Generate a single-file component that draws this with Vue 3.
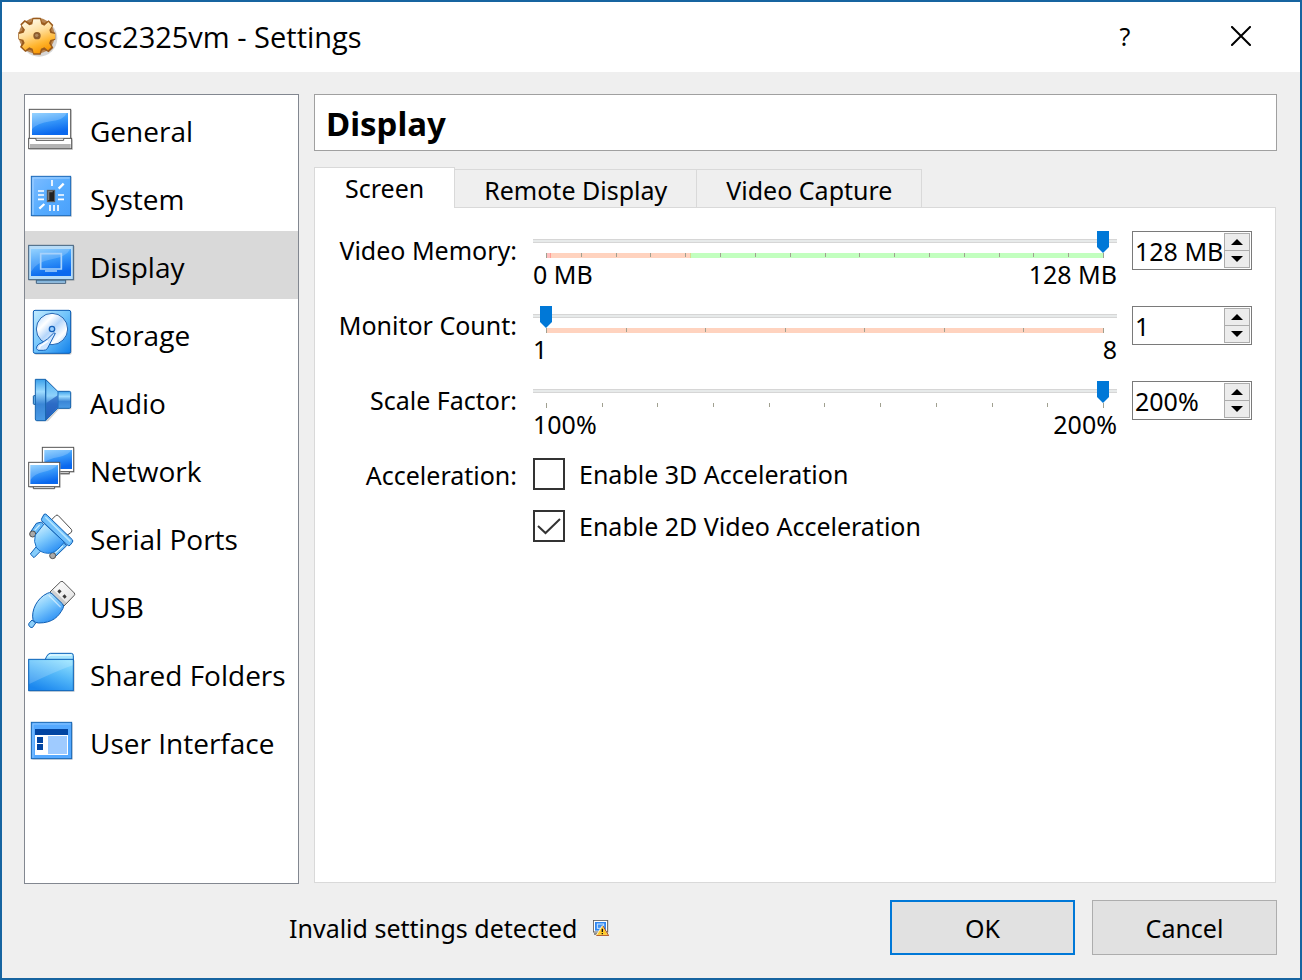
<script setup>
import { ref, reactive } from 'vue'

const categories = [
  { id: 'general', name: 'General' },
  { id: 'system', name: 'System' },
  { id: 'display', name: 'Display' },
  { id: 'storage', name: 'Storage' },
  { id: 'audio', name: 'Audio' },
  { id: 'network', name: 'Network' },
  { id: 'serial', name: 'Serial Ports' },
  { id: 'usb', name: 'USB' },
  { id: 'folders', name: 'Shared Folders' },
  { id: 'interface', name: 'User Interface' },
]
const current = ref('display')

const tabs = ['Screen', 'Remote Display', 'Video Capture']
const activeTab = ref('Screen')

const sliders = reactive([
  {
    id: 'memory', label: 'Video Memory:', min: 0, max: 128, value: 128, unit: ' MB', ticks: 16,
    zones: [
      { kind: 'bad', size: 1 },
      { kind: 'warn', size: 32 },
      { kind: 'good', size: 95 },
    ],
  },
  {
    id: 'monitors', label: 'Monitor Count:', min: 1, max: 8, value: 1, unit: '', ticks: 7,
    zones: [{ kind: 'warn', size: 7 }],
  },
  { id: 'scale', label: 'Scale Factor:', min: 100, max: 200, value: 200, unit: '%', ticks: 10, zones: [] },
])

const accel3d = ref(false)
const accel2d = ref(true)

function setValue(s, v) {
  if (!Number.isNaN(v)) s.value = Math.min(s.max, Math.max(s.min, v))
}
</script>

<template>
  <svg class="defs" aria-hidden="true">
    <defs>
      <linearGradient id="gScreen" x1="0" y1="0" x2="0.3" y2="1">
        <stop offset="0" stop-color="#7cc8ff" /><stop offset="0.45" stop-color="#3a9bfa" /><stop offset="1" stop-color="#0a68ee" />
      </linearGradient>
      <linearGradient id="gTile" x1="0" y1="0" x2="1" y2="1">
        <stop offset="0" stop-color="#7ebcff" /><stop offset="0.5" stop-color="#58adff" /><stop offset="1" stop-color="#4aa0fb" />
      </linearGradient>
      <linearGradient id="gDrive" x1="0" y1="0" x2="1" y2="1">
        <stop offset="0" stop-color="#c4ecff" /><stop offset="0.5" stop-color="#6fc3fb" /><stop offset="1" stop-color="#0f7fea" />
      </linearGradient>
      <linearGradient id="gDisc" x1="0" y1="0" x2="1" y2="1">
        <stop offset="0" stop-color="#a9d3ff" /><stop offset="0.3" stop-color="#ffffff" /><stop offset="0.5" stop-color="#b5d6fb" />
        <stop offset="0.75" stop-color="#ffffff" /><stop offset="1" stop-color="#8fc3fa" />
      </linearGradient>
      <linearGradient id="gHorn" x1="0" y1="0" x2="0" y2="1">
        <stop offset="0" stop-color="#3aa0ea" /><stop offset="0.3" stop-color="#9edcff" /><stop offset="0.6" stop-color="#3a86d6" /><stop offset="1" stop-color="#4a9be6" />
      </linearGradient>
      <linearGradient id="gCone" x1="0" y1="0" x2="0" y2="1">
        <stop offset="0" stop-color="#4fb0f0" /><stop offset="0.4" stop-color="#8fd2fb" /><stop offset="0.6" stop-color="#3f86d8" /><stop offset="1" stop-color="#2a5fb8" />
      </linearGradient>
      <linearGradient id="gPlug" x1="0" y1="0" x2="0.6" y2="1">
        <stop offset="0" stop-color="#e2f8ff" /><stop offset="0.5" stop-color="#82ccfd" /><stop offset="1" stop-color="#2b8ff4" />
      </linearGradient>
      <linearGradient id="gMetal" x1="0" y1="0" x2="1" y2="1">
        <stop offset="0" stop-color="#ffffff" /><stop offset="0.5" stop-color="#f2f2f2" /><stop offset="1" stop-color="#dcdcdc" />
      </linearGradient>
      <linearGradient id="gFolder" x1="0.8" y1="0" x2="0.3" y2="1">
        <stop offset="0" stop-color="#8fe0ff" /><stop offset="0.5" stop-color="#4fb4f8" /><stop offset="1" stop-color="#1a86ee" />
      </linearGradient>
      <linearGradient id="gGear" x1="0.2" y1="0" x2="0.6" y2="1">
        <stop offset="0" stop-color="#fffdf0" /><stop offset="0.4" stop-color="#ffe0a0" /><stop offset="0.75" stop-color="#ffb52e" /><stop offset="1" stop-color="#f79400" />
      </linearGradient>
      <linearGradient id="gStand" x1="0" y1="0" x2="0" y2="1">
        <stop offset="0" stop-color="#5d96c6" /><stop offset="1" stop-color="#b4dcf8" />
      </linearGradient>
    </defs>
  </svg>

  <div class="window">
    <header class="titlebar">
      <svg class="gear" viewBox="48 42 132 132" aria-hidden="true">
        <circle cx="117" cy="112" r="55" fill="#8a8a8a" opacity="0.35" />
        <circle cx="110" cy="104" r="54" fill="#b98550" />
        <path d="M98 50 H122 L126 64 L134 66 L146 58 L160 72 L153 87 L156 92 L166 95 V116 L156 120 L153 127 L160 140 L146 154 L132 146 L126 149 L122 161 H100 L96 149 L88 146 L76 153 L60 138 L67 125 L65 119 L55 115 V94 L66 90 L68 84 L61 70 L74 57 L88 65 L95 62 Z" fill="#9a5b1d" />
        <path d="M100 55 L120 55 L124 70 L133 74 L145 63 L156 75 L148 87 L151 96 L165 99 L165 113 L151 117 L147 127 L154 138 L144 148 L133 139 L123 143 L119 157 L101 157 L98 143 L88 139 L76 148 L66 137 L74 126 L70 116 L57 113 L57 99 L71 95 L75 86 L65 73 L75 63 L88 73 L97 70 Z" fill="url(#gGear)" />
        <circle cx="111" cy="104" r="11" fill="#8c5c2c" />
        <circle cx="110" cy="103" r="5" fill="#b08a5e" />
      </svg>
      <h1 class="title">cosc2325vm - Settings</h1>
      <button class="win-btn" type="button" aria-label="Help">?</button>
      <button class="win-btn" type="button" aria-label="Close">
        <svg viewBox="0 0 20 20" width="20" height="20"><path d="M1 1 L19 19 M19 1 L1 19" stroke="#000" stroke-width="2" stroke-linecap="square" fill="none" /></svg>
      </button>
    </header>

    <main class="body">
      <nav class="sidebar">
        <button
          v-for="c in categories" :key="c.id" type="button" class="category"
          :class="{ selected: c.id === current }" @click="current = c.id"
        >
          <svg v-if="c.id === 'general'" class="icon" viewBox="24 45 144 144">
            <rect x="30" y="60" width="126" height="88" fill="#bbb" opacity=".6" /><rect x="28" y="148" width="131" height="32" fill="#bbb" opacity=".6" />
            <rect x="28" y="58" width="124" height="88" fill="#fff" stroke="#555" stroke-width="3" />
            <rect x="36" y="69" width="108" height="66" fill="url(#gScreen)" />
            <path d="M36 69 H140 Q132 90 92 94 Q50 100 36 118 Z" fill="#fff" opacity=".2" />
            <rect x="26" y="145" width="129" height="31" fill="#fff" stroke="#555" stroke-width="3" />
            <rect x="30" y="162" width="122" height="12" fill="#b4b4b4" />
            <path d="M48 146 V151 H131 V146" fill="#fff" stroke="#555" stroke-width="3" />
          </svg>
          <svg v-else-if="c.id === 'system'" class="icon" viewBox="24 249 144 144">
            <rect x="37" y="261" width="119" height="120" fill="#bbb" opacity=".5" />
            <rect x="34" y="259" width="118" height="118" fill="url(#gTile)" stroke="#1a68b8" stroke-width="3" />
            <path d="M39 374 V264 H149" fill="none" stroke="#a6d3ff" stroke-width="3" />
            <path d="M96 270 V288 M90 345 V363 M102 345 V363 M114 345 V363 M54 303 H72 M54 315 H72 M54 328 H72 M114 315 H132 M114 328 H132" stroke="#fff" stroke-width="5" />
            <path d="M116 296 L131 281 M58 356 L73 342" stroke="#fff" stroke-width="7" />
            <rect x="82" y="301" width="22" height="34" fill="#222" stroke="#5d5d5d" stroke-width="3" />
            <path d="M86 331 V305 H98" fill="none" stroke="#777" stroke-width="4" />
          </svg>
          <svg v-else-if="c.id === 'display'" class="icon" viewBox="24 453 144 144">
            <rect x="28" y="468" width="136" height="104" fill="#999" opacity=".5" />
            <path d="M49 570 H137 V580 H49 Z" fill="url(#gStand)" stroke="#41607c" stroke-width="3" />
            <rect x="26" y="466" width="134" height="103" fill="#b7dcf8" stroke="#41607c" stroke-width="3" />
            <rect x="33" y="477" width="120" height="81" fill="url(#gScreen)" />
            <path d="M33 477 H150 Q140 500 94 508 Q50 516 33 545 Z" fill="#fff" opacity=".18" />
            <path d="M62 491 H124 V537 H62 Z M75 543 H111" fill="none" stroke="#a8d2fb" stroke-width="5" />
          </svg>
          <svg v-else-if="c.id === 'storage'" class="icon" viewBox="24 27 144 144">
            <rect x="43" y="33" width="112" height="131" rx="6" fill="#999" opacity=".5" />
            <rect x="40" y="31" width="112" height="129" rx="5" fill="url(#gDrive)" stroke="#0a5cb4" stroke-width="3" />
            <circle cx="96" cy="87" r="47" fill="url(#gDisc)" stroke="#2467b5" stroke-width="3" />
            <circle cx="96" cy="87" r="8" fill="#9ccfff" stroke="#1460b8" stroke-width="4" />
            <path d="M106 100 L82 146 Q78 151 70 151 H54 Q46 147 51 138 Q54 132 66 128 Q82 120 101 99 Z" fill="#cfe6ff" stroke="#1460b8" stroke-width="3" />
            <path d="M60 146 Q56 139 68 134 L84 123" fill="none" stroke="#fff" stroke-width="4" />
          </svg>
          <svg v-else-if="c.id === 'audio'" class="icon" viewBox="24 231 144 144">
            <path d="M50 240 H82 L117 277 H154 V328 H117 L84 364 H50 Z" fill="#999" opacity=".45" />
            <rect x="40" y="287" width="9" height="26" rx="2" fill="#6cb8f0" stroke="#15599e" stroke-width="3" />
            <rect x="111" y="274" width="41" height="51" rx="4" fill="url(#gHorn)" stroke="#1663ad" stroke-width="3" />
            <path d="M77 239 L114 275 V324 L77 361 Z" fill="url(#gCone)" stroke="#1b6abc" stroke-width="3" />
            <path d="M46 238 H77 V362 H50 Q46 362 46 357 Z" fill="url(#gHorn)" stroke="#1663ad" stroke-width="3" />
            <path d="M79 309 L113 286 V322 L79 355 Z" fill="#2460bd" opacity=".7" />
          </svg>
          <svg v-else-if="c.id === 'network'" class="icon" viewBox="24 435 144 144">
            <path d="M70 445 H164 V518 H150 V525 H70 Z" fill="#aaa" opacity=".5" />
            <path d="M118 515 H148 V521 H118 Z" fill="#fff" stroke="#555" stroke-width="3" />
            <rect x="67" y="442" width="94" height="73" fill="#fff" stroke="#555" stroke-width="3" />
            <rect x="73" y="450" width="83" height="57" fill="url(#gScreen)" />
            <path d="M73 450 H154 Q146 466 114 472 Q88 476 73 487 Z" fill="#fff" opacity=".2" />
            <rect x="29" y="490" width="93" height="74" fill="#aaa" opacity=".6" />
            <path d="M40 560 H104 V566 H40 Z" fill="#fff" stroke="#555" stroke-width="3" />
            <rect x="26" y="487" width="93" height="73" fill="#fff" stroke="#555" stroke-width="3" />
            <rect x="31" y="495" width="83" height="57" fill="url(#gScreen)" />
            <path d="M31 495 H112 Q100 510 70 516 Q42 522 31 540 Z" fill="#fff" opacity=".2" />
          </svg>
          <svg v-else-if="c.id === 'serial'" class="icon" viewBox="24 39 144 144">
            <path d="M92 62 L107 47 Q111 43 115 47 L154 88 Q157 92 154 97 L141 106 Z" fill="#fff" stroke="#4b4b4b" stroke-width="3" />
            <path d="M49 70 L65 66 L74 78 L43 108 L33 94 Z M112 138 L128 126 L140 137 L106 170 L93 158 Z" fill="#6cbcf8" stroke="#0e5db2" stroke-width="3" />
            <path d="M44 91 L59 75 M105 160 L129 137" stroke="#c8edff" stroke-width="4" />
            <circle cx="38" cy="102" r="9" fill="#aaa" stroke="#505050" stroke-width="3" />
            <circle cx="98" cy="167" r="9" fill="#aaa" stroke="#505050" stroke-width="3" />
            <path d="M48 141 L61 154 L42 173 L31 162 Z" fill="#86cdfb" stroke="#0e5db2" stroke-width="3" />
            <path d="M73 71 L133 126 L122 139 Q103 161 83 160 Q60 158 49 142 Q40 125 46 105 Z" fill="url(#gPlug)" stroke="#1a70c6" stroke-width="3" />
            <path d="M72 43 Q77 40 82 46 L157 119 Q160 123 157 127 L150 136 Q146 139 141 134 L65 62 Q63 58 66 54 Z" fill="#6fbffb" stroke="#0e5db2" stroke-width="3" />
            <path d="M76 51 L151 124" stroke="#b5e6ff" stroke-width="5" />
          </svg>
          <svg v-else-if="c.id === 'usb'" class="icon" viewBox="24 243 144 144">
            <path d="M90 276 L122 245 Q126 242 130 246 L163 279 Q166 283 162 287 L132 318 Z" fill="url(#gMetal)" stroke="#555" stroke-width="3" />
            <path d="M92 276 L100 269 L140 309 L132 317 Z" fill="#999" opacity=".4" />
            <path d="M112 274 L118 268 L125 274 L118 281 Z M127 289 L134 283 L140 290 L134 296 Z" fill="#3b3b3b" />
            <path d="M36 360 L47 369 L38 382 Q33 384 29 380 Q24 375 27 370 Z" fill="#8dd0fb" stroke="#0e5db2" stroke-width="3" />
            <path d="M82 280 Q89 275 96 281 L128 312 Q133 318 129 325 C116 350 98 369 56 369 Q45 370 39 359 C33 332 51 294 82 280 Z" fill="url(#gPlug)" stroke="#0e5db2" stroke-width="3" />
            <path d="M86 286 L122 322" stroke="#fff" opacity=".55" stroke-width="4" />
          </svg>
          <svg v-else-if="c.id === 'folders'" class="icon" viewBox="24 447 144 144">
            <rect x="28" y="481" width="136" height="94" fill="#999" opacity=".5" />
            <path d="M75 480 L80 469 Q85 460 91 460 H154 Q160 460 160 467 V482 H75 Z" fill="#a9e6ff" stroke="#0a61b8" stroke-width="3" />
            <path d="M86 469 Q89 465 94 465 H155" stroke="#e4faff" stroke-width="4" fill="none" />
            <rect x="26" y="478" width="134" height="94" fill="url(#gFolder)" stroke="#0a61b8" stroke-width="3" />
            <path d="M28 481 H158 V496 Q105 515 28 552 Z" fill="#fff" opacity=".18" />
          </svg>
          <svg v-else class="icon" viewBox="24 651 144 144">
            <rect x="37" y="670" width="121" height="109" fill="#999" opacity=".5" />
            <rect x="34" y="667" width="121" height="109" fill="#55a9ff" stroke="#1565b4" stroke-width="3" />
            <path d="M39 773 V672 H152" stroke="#8bc5ff" stroke-width="3" fill="none" />
            <rect x="45" y="687" width="99" height="18" fill="#0245a2" /><rect x="45" y="705" width="99" height="60" fill="#fff" />
            <rect x="51" y="711" width="18" height="18" fill="#0245a2" /><rect x="51" y="732" width="18" height="18" fill="#0245a2" />
            <rect x="84" y="708" width="57" height="54" fill="#9fcbff" />
          </svg>
          <span>{{ c.name }}</span>
        </button>
      </nav>

      <section class="content">
        <h2 class="page-title">Display</h2>

        <div class="tabs" role="tablist">
          <button
            v-for="t in tabs" :key="t" type="button" role="tab" class="tab"
            :class="{ active: t === activeTab }" :aria-selected="t === activeTab" @click="activeTab = t"
          >{{ t }}</button>
        </div>

        <div class="pane">
          <div v-for="s in sliders" :key="s.id" class="setting">
            <label class="setting-label" :for="s.id">{{ s.label }}</label>
            <div class="slider">
              <div class="groove">
                <input :id="s.id" v-model.number="s.value" type="range" :min="s.min" :max="s.max">
              </div>
              <div class="scale">
                <div class="zones">
                  <i v-for="z in s.zones" :key="z.kind" :class="z.kind" :style="{ flexGrow: z.size }"></i>
                </div>
                <div class="ticks"><i v-for="n in s.ticks + 1" :key="n"></i></div>
              </div>
              <div class="limits"><span>{{ s.min }}{{ s.unit }}</span><span>{{ s.max }}{{ s.unit }}</span></div>
            </div>
            <div class="spin">
              <input
                type="text" :aria-label="s.label" :value="s.value + s.unit"
                @change="setValue(s, parseInt($event.target.value))"
              >
              <div class="steps">
                <button type="button" aria-label="Increase" @click="setValue(s, s.value + 1)">
                  <svg viewBox="0 0 12 6" width="12" height="6"><path d="M0 6 L6 0 L12 6 Z" /></svg>
                </button>
                <button type="button" aria-label="Decrease" @click="setValue(s, s.value - 1)">
                  <svg viewBox="0 0 12 6" width="12" height="6"><path d="M0 0 L6 6 L12 0 Z" /></svg>
                </button>
              </div>
            </div>
          </div>

          <div class="setting" role="group" aria-labelledby="accel">
            <span id="accel" class="setting-label">Acceleration:</span>
            <div class="checks">
              <label class="check"><input v-model="accel3d" type="checkbox"><span>Enable 3D Acceleration</span></label>
              <label class="check"><input v-model="accel2d" type="checkbox"><span>Enable 2D Video Acceleration</span></label>
            </div>
          </div>
        </div>
      </section>
    </main>

    <footer class="footer">
      <div class="status">
        <span>Invalid settings detected</span>
        <svg viewBox="0 0 48 48" width="16" height="16" aria-hidden="true">
          <rect x="1" y="1" width="43" height="35" fill="#fff" stroke="#5a5a5a" stroke-width="3" />
          <rect x="6" y="6" width="33" height="26" fill="#2f86f0" />
          <rect x="13" y="12" width="19" height="13" fill="#3f93f4" stroke="#cfe6ff" stroke-width="3" />
          <path d="M3 42 H20" stroke="#5a5a5a" stroke-width="4" />
          <path d="M28 17 L46 46 H10 Z" fill="#ffc928" stroke="#fff2c8" stroke-width="3" />
          <path d="M30 18 L47 47 H10" fill="none" stroke="#a8481a" stroke-width="3" />
          <path d="M28 26 V36 M28 39 V43" stroke="#111" stroke-width="4" />
        </svg>
      </div>
      <button type="button" class="action primary">OK</button>
      <button type="button" class="action">Cancel</button>
    </footer>
  </div>
</template>

<style>
body { background: #efefef; }
</style>

<style scoped>
.defs { position: absolute; width: 0; height: 0; }
.window {
  box-sizing: border-box;
  min-height: 100vh;
  display: flex;
  flex-direction: column;
  border: 2px solid #1664a0;
  background: #efefef;
  color: #000;
  font-family: "Noto Sans", "Open Sans", sans-serif;
  font-size: 25px;
  line-height: 32px;
}
button, input { font: inherit; color: inherit; margin: 0; }
button { padding: 0; border: 0; background: none; }

.titlebar { display: flex; align-items: center; height: 70px; padding: 0 1px 0 14px; background: #fff; }
.gear { width: 44px; height: 44px; flex: none; }
.title { flex: 1; margin: 0; padding-left: 3px; font: 400 29px/36px "Open Sans", "Noto Sans", sans-serif; }
.win-btn { width: 116px; height: 68px; margin-bottom: 2px; display: flex; align-items: center; justify-content: center; }

.body { flex: 1; display: flex; gap: 15px; padding: 22px 23px 0 22px; }
.sidebar { box-sizing: border-box; width: 275px; flex: none; border: 1px solid #828790; background: #fff; }
.category {
  display: flex; align-items: center; gap: 14px; width: 100%; height: 68px; padding-left: 3px;
  text-align: left; white-space: nowrap; font: 400 28px/36px "Open Sans", "Noto Sans", sans-serif;
}
.category span { padding-top: 4px; }
.category.selected { background: #d9d9d9; }
.icon { width: 48px; height: 48px; flex: none; }

.content { flex: 1; min-width: 0; display: flex; flex-direction: column; padding-bottom: 1px; }
.page-title {
  margin: 0 0 16px; padding: 11px 11px 8px; border: 1px solid #a0a0a0; background: #fff;
  font-size: 33px; line-height: 36px; font-weight: 700;
}
.tabs { display: flex; align-items: flex-end; height: 41px; }
.tab {
  box-sizing: border-box; height: 39px; padding: 3px 29px 0; border: 1px solid #d9d9d9;
  border-left: 0; background: #efefef; white-space: nowrap;
}
.tab.active { height: 41px; padding: 0 30px; border-left: 1px solid #d9d9d9; border-bottom: 0; background: #fff; z-index: 1; }
.pane {
  flex: 1; display: flex; flex-direction: column; margin: -1px 1px 0 0; padding: 23px 23px 0 19px;
  border: 1px solid #d9d9d9; background: #fff;
}
.setting { display: grid; grid-template-columns: 184px minmax(0, 1fr) 120px; column-gap: 15px; min-height: 75px; }
.setting-label { text-align: right; padding: 3px 1px 0 0; white-space: nowrap; }

.groove {
  display: flex; height: 22px; padding: 0 8px 0 7px;
  background: linear-gradient(#d6d6d6 0 1px, #e7eaea 1px 3px, #d6d6d6 3px 4px) 0 8px / 100% 4px no-repeat;
}
.groove input { -webkit-appearance: none; appearance: none; width: 100%; height: 22px; background: none; }
.groove input::-webkit-slider-thumb {
  -webkit-appearance: none; width: 12px; height: 22px; background: #0078d7;
  clip-path: polygon(0 0, 100% 0, 100% 16px, 50% 100%, 0 16px);
}
.scale { display: grid; height: 5px; margin: 0 13px; }
.zones, .ticks { grid-area: 1 / 1; display: flex; }
.zones i { flex-basis: 0; }
.bad { background: #ffbfbf; }
.warn { background: #ffd3bf; }
.good { background: #c2ffbf; }
.bad + .warn { border-left: 1px solid #ff9f95; }
.warn + .good { border-left: 1px solid #d9dd8f; }
.ticks { justify-content: space-between; }
.ticks i { width: 1px; height: 4px; background: #a0a090; }
.ticks i:first-child, .ticks i:last-child { height: 5px; }
.limits { display: flex; justify-content: space-between; line-height: 32px; }

.spin { box-sizing: border-box; display: flex; height: 39px; border: 1px solid #7a7a7a; background: #fff; }
.spin input { flex: 1; min-width: 0; padding: 0 0 0 2px; border: 0; background: none; outline: 0; }
.steps { display: flex; flex-direction: column; width: 26px; margin: 1px; border: 1px solid #acacac; box-sizing: border-box; }
.steps button { flex: 1; display: flex; align-items: center; justify-content: center; background: #ececec; }
.steps button + button { border-top: 1px solid #acacac; }

.checks { display: flex; flex-direction: column; align-items: flex-start; gap: 20px; padding-top: 2px; }
.check { display: flex; align-items: center; gap: 14px; white-space: nowrap; }
.check input {
  -webkit-appearance: none; appearance: none; box-sizing: border-box; width: 32px; height: 32px;
  border: 2px solid #333; background: #fff; flex: none;
}
.check input:checked {
  background: #fff url("data:image/svg+xml,%3Csvg xmlns='http://www.w3.org/2000/svg' viewBox='0 0 28 28'%3E%3Cpath d='M3 14 L10.500 21 L25 7' fill='none' stroke='%23333' stroke-width='2'/%3E%3C/svg%3E") center / 28px 28px no-repeat;
}

.footer { display: flex; align-items: center; gap: 17px; padding: 16px 23px 23px 22px; }
.status { flex: 1; display: flex; align-items: center; gap: 16px; padding-left: 265px; }
.action { box-sizing: border-box; width: 185px; height: 55px; border: 1px solid #adadad; background: #e1e1e1; }
.action.primary { border: 2px solid #0078d7; }
</style>
